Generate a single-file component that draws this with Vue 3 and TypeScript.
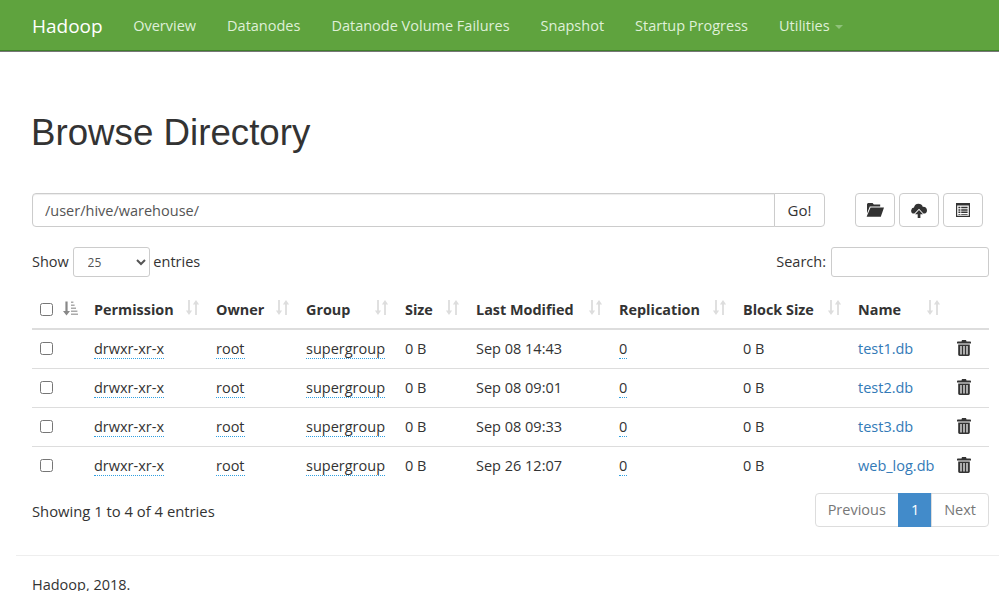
<script setup lang="ts">
interface Entry {
  name: string;
  modified: string;
}

const navItems = ['Overview', 'Datanodes', 'Datanode Volume Failures', 'Snapshot', 'Startup Progress'];

const columns = [
  { label: 'Permission', cls: 'c-perm' },
  { label: 'Owner', cls: 'c-owner' },
  { label: 'Group', cls: 'c-group' },
  { label: 'Size', cls: 'c-size' },
  { label: 'Last Modified', cls: 'c-mod' },
  { label: 'Replication', cls: 'c-repl' },
  { label: 'Block Size', cls: 'c-block' },
  { label: 'Name', cls: 'c-name' },
];

const entries: Entry[] = [
  { name: 'test1.db', modified: 'Sep 08 14:43' },
  { name: 'test2.db', modified: 'Sep 08 09:01' },
  { name: 'test3.db', modified: 'Sep 08 09:33' },
  { name: 'web_log.db', modified: 'Sep 26 12:07' },
];
</script>

<template>
  <div class="page">
    <nav class="navbar">
      <a class="brand">Hadoop</a>
      <ul class="nav">
        <li v-for="item in navItems" :key="item"><a>{{ item }}</a></li>
        <li><a>Utilities <span class="caret"></span></a></li>
      </ul>
    </nav>

    <main class="container">
      <h1>Browse Directory</h1>

      <div class="path-row">
        <div class="path-group">
          <input class="path-input" value="/user/hive/warehouse/" />
          <button class="go">Go!</button>
        </div>
        <div class="tools">
          <button class="tool">
            <svg width="18" height="14" viewBox="0 0 18 14">
              <path fill="#333" d="M2.6 0h4l1.2 1.6h6.4v2H3.8L1 10.6V1.4C1 .6 1.8 0 2.6 0z" />
              <path fill="#333" d="M4.5 4.6H18l-3.2 9.2H0.6z" />
            </svg>
          </button>
          <button class="tool">
            <svg width="16" height="16" viewBox="0 0 16 16">
              <path fill="#333" d="M3.4 11.6H3A3 3 0 0 1 .2 8.2 3 3 0 0 1 3 5.6 4.6 4.6 0 0 1 7.4 1.8a4.8 4.8 0 0 1 4.5 3.1A3.5 3.5 0 0 1 16 8.2a3.4 3.4 0 0 1-3.3 3.4h-.3L8 6.8z" />
              <path fill="#333" d="M8 8l4 4.2H9.4V16H6.7v-3.8H4z" />
            </svg>
          </button>
          <button class="tool">
            <svg width="14" height="14" viewBox="0 0 14 14">
              <path fill="#333" fill-rule="evenodd" d="M0 0h14v14H0zM1.2 2.6v10.2h11.6V2.6z" />
              <path fill="#333" d="M2.4 3.8h2v1.5h-2zM5.2 3.8h6.4v1.5H5.2zM2.4 6.2h2v1.5h-2zM5.2 6.2h6.4v1.5H5.2zM2.4 8.6h2v1.5h-2zM5.2 8.6h6.4v1.5H5.2zM2.4 11h2v.8h-2zM5.2 11h6.4v.8H5.2z" />
            </svg>
          </button>
        </div>
      </div>

      <div class="filter-row">
        <label class="length">
          Show
          <select class="length-select">
            <option>25</option>
          </select>
          entries
        </label>
        <label class="search">
          Search:
          <input class="search-input" />
        </label>
      </div>

      <table class="listing">
        <thead>
          <tr>
            <th class="c-check">
              <input type="checkbox" class="check nudged" />
              <svg class="sort-active" width="15" height="15" viewBox="0 0 15 14">
                <path fill="#888" d="M2.4 0h2.2v9.4H7L3.5 14 0 9.4h2.4z" />
                <path fill="#aaa" d="M8 0h2.4v1.6H8zM8 3h3.6v1.6H8zM8 6h5v1.6H8zM8 9h6.4v1.6H8zM8 12h7v1.6H8z" />
              </svg>
            </th>
            <th v-for="col in columns" :key="col.label" :class="col.cls">
              <span class="head">
                {{ col.label }}
                <svg class="sort" width="15" height="15" viewBox="0 0 14 15">
                  <path fill="#ddd" d="M2.6 0h1.8v10.6h2.2L3.5 15 .4 10.6h2.2z" />
                  <path fill="#ddd" d="M10.5 0l3.1 4.4h-2.2V15H9.6V4.4H7.4z" />
                </svg>
              </span>
            </th>
            <th class="c-del"></th>
          </tr>
        </thead>
        <tbody>
          <tr v-for="entry in entries" :key="entry.name">
            <td><input type="checkbox" class="check nudged" /></td>
            <td><span class="dotted">drwxr-xr-x</span></td>
            <td><span class="dotted">root</span></td>
            <td><span class="dotted">supergroup</span></td>
            <td>0 B</td>
            <td>{{ entry.modified }}</td>
            <td><span class="dotted">0</span></td>
            <td>0 B</td>
            <td><a class="link">{{ entry.name }}</a></td>
            <td>
              <svg class="trash" width="14" height="16" viewBox="0 0 14 16">
                <path fill="#333" d="M5 0h4l.5 1.4H13c.6 0 1 .4 1 1v1H0v-1c0-.6.4-1 1-1h3.5z" />
                <path fill="#333" fill-rule="evenodd" d="M1.2 4.4h11.6V14.6c0 .8-.6 1.4-1.4 1.4H2.6c-.8 0-1.4-.6-1.4-1.4zM3.4 6v8.4h1.2V6zM6.4 6v8.4h1.2V6zM9.4 6v8.4h1.2V6z" />
              </svg>
            </td>
          </tr>
        </tbody>
      </table>

      <div class="table-foot">
        <div class="info">Showing 1 to 4 of 4 entries</div>
        <ul class="pagination">
          <li class="disabled first">Previous</li>
          <li class="active">1</li>
          <li class="disabled last">Next</li>
        </ul>
      </div>
    </main>

    <hr class="rule" />
    <footer class="footer">Hadoop, 2018.</footer>
  </div>
</template>

<style>
html,
body {
  margin: 0;
  height: 591px;
  overflow: hidden;
  background: #fff;
}
</style>

<style scoped>
.page {
  font-family: 'Open Sans', 'Noto Sans', sans-serif;
  font-size: 14.5px;
  line-height: 20px;
  color: #333;
}

.navbar {
  display: flex;
  align-items: center;
  height: 50px;
  box-sizing: content-box;
  padding-left: 32px;
  background: #5fa33e;
  border-bottom: 1px solid #3f7f2a;
  box-shadow: 0 1px 0 #777;
}

.brand {
  font-size: 19px;
  color: #fff;
  margin-right: 15px;
  padding-top: 2px;
}

.nav {
  display: flex;
  list-style: none;
  margin: 0;
  padding: 2px 0 0;
}

.nav a {
  display: block;
  padding: 0 15.5px;
  color: #dff0d8;
}

.caret {
  display: inline-block;
  width: 0;
  height: 0;
  margin-left: 2px;
  vertical-align: middle;
  border-top: 4px solid #8fc27a;
  border-left: 4px solid transparent;
  border-right: 4px solid transparent;
}

.container {
  padding: 0 10px 0 32px;
}

h1 {
  font-family: 'Liberation Sans', Arial, sans-serif;
  font-size: 36.7px;
  font-weight: 400;
  line-height: 40px;
  margin: 62px 0 40px -1px;
}

.path-row {
  display: flex;
  justify-content: space-between;
  align-items: flex-start;
  height: 34px;
}

.path-group {
  display: flex;
  width: 793px;
  height: 34px;
}

.path-input {
  flex: 1;
  min-width: 0;
  box-sizing: border-box;
  height: 34px;
  padding: 0 12px;
  border: 1px solid #ccc;
  border-radius: 4px 0 0 4px;
  font: inherit;
  color: #555;
  box-shadow: inset 0 1px 1px rgba(0, 0, 0, 0.075);
}

.go {
  width: 51px;
  height: 34px;
  margin-left: -1px;
  padding: 0;
  border: 1px solid #ccc;
  border-radius: 0 4px 4px 0;
  background: #fff;
  font: inherit;
  font-size: 15px;
  color: #333;
}

.tools {
  display: flex;
  gap: 4px;
  margin-right: 6px;
}

.tool {
  display: flex;
  align-items: center;
  justify-content: center;
  width: 40px;
  height: 34px;
  padding: 0;
  border: 1px solid #ccc;
  border-radius: 4px;
  background: #fff;
}

.filter-row {
  display: flex;
  justify-content: space-between;
  align-items: center;
  height: 30px;
  margin-top: 20px;
}

.length-select {
  width: 77px;
  height: 30px;
  margin: 0;
  padding: 0 10px;
  border: 1px solid #ccc;
  border-radius: 3px;
  background: #fff;
  font: inherit;
  font-size: 12px;
  color: #555;
}

.search {
  display: flex;
  align-items: center;
  gap: 5px;
}

.search-input {
  box-sizing: border-box;
  width: 158px;
  height: 30px;
  border: 1px solid #ccc;
  border-radius: 3px;
}

.listing {
  width: 957px;
  margin-top: 12px;
  table-layout: fixed;
  border-collapse: collapse;
}

.listing th {
  height: 40px;
  box-sizing: border-box;
  padding: 9px 8px 7px;
  text-align: left;
  font-weight: 700;
  font-size: 14.4px;
  border-bottom: 2px solid #ddd;
}

.listing td {
  height: 39px;
  box-sizing: border-box;
  padding: 0 8px;
  vertical-align: middle;
  border-top: 1px solid #ddd;
}

.listing thead + tbody tr:first-child td {
  border-top: 0;
}

.c-check {
  width: 54px;
}

.c-perm {
  width: 122px;
}

.c-owner {
  width: 90px;
}

.c-group {
  width: 99px;
}

.c-size {
  width: 71px;
}

.c-mod {
  width: 143px;
}

.c-repl {
  width: 124px;
}

.c-block {
  width: 115px;
}

.c-name {
  width: 99px;
}

.listing th.c-check {
  white-space: nowrap;
}

.check {
  width: 13px;
  height: 13px;
  margin: 0;
  vertical-align: middle;
}

.nudged {
  position: relative;
  top: -1px;
}

.sort-active {
  margin-left: 10px;
  margin-top: -4px;
  vertical-align: middle;
}

.head {
  display: flex;
  align-items: center;
  justify-content: space-between;
  white-space: nowrap;
}

.sort {
  margin-top: -4px;
}

.dotted {
  border-bottom: 1px dotted #2f9fe0;
}

.link {
  color: #337ab7;
}

.trash {
  display: block;
  margin-top: -2px;
}

.table-foot {
  display: flex;
  justify-content: space-between;
  margin-top: 8px;
}

.info {
  padding-top: 8px;
  font-size: 14.8px;
}

.pagination {
  display: flex;
  list-style: none;
  margin: 0;
  padding: 0;
}

.pagination li {
  box-sizing: border-box;
  height: 34px;
  padding: 6px 12px;
  margin-left: -1px;
  border: 1px solid #ddd;
  background: #fff;
}

.pagination .disabled {
  color: #777;
}

.pagination .active {
  background: #428bca;
  border-color: #428bca;
  color: #fff;
}

.pagination .first {
  border-radius: 4px 0 0 4px;
}

.pagination .last {
  border-radius: 0 4px 4px 0;
}

.rule {
  margin: 28px 0 0 16px;
  border: 0;
  border-top: 1px solid #eee;
}

.footer {
  margin-top: 19px;
  padding-left: 32px;
}
</style>
